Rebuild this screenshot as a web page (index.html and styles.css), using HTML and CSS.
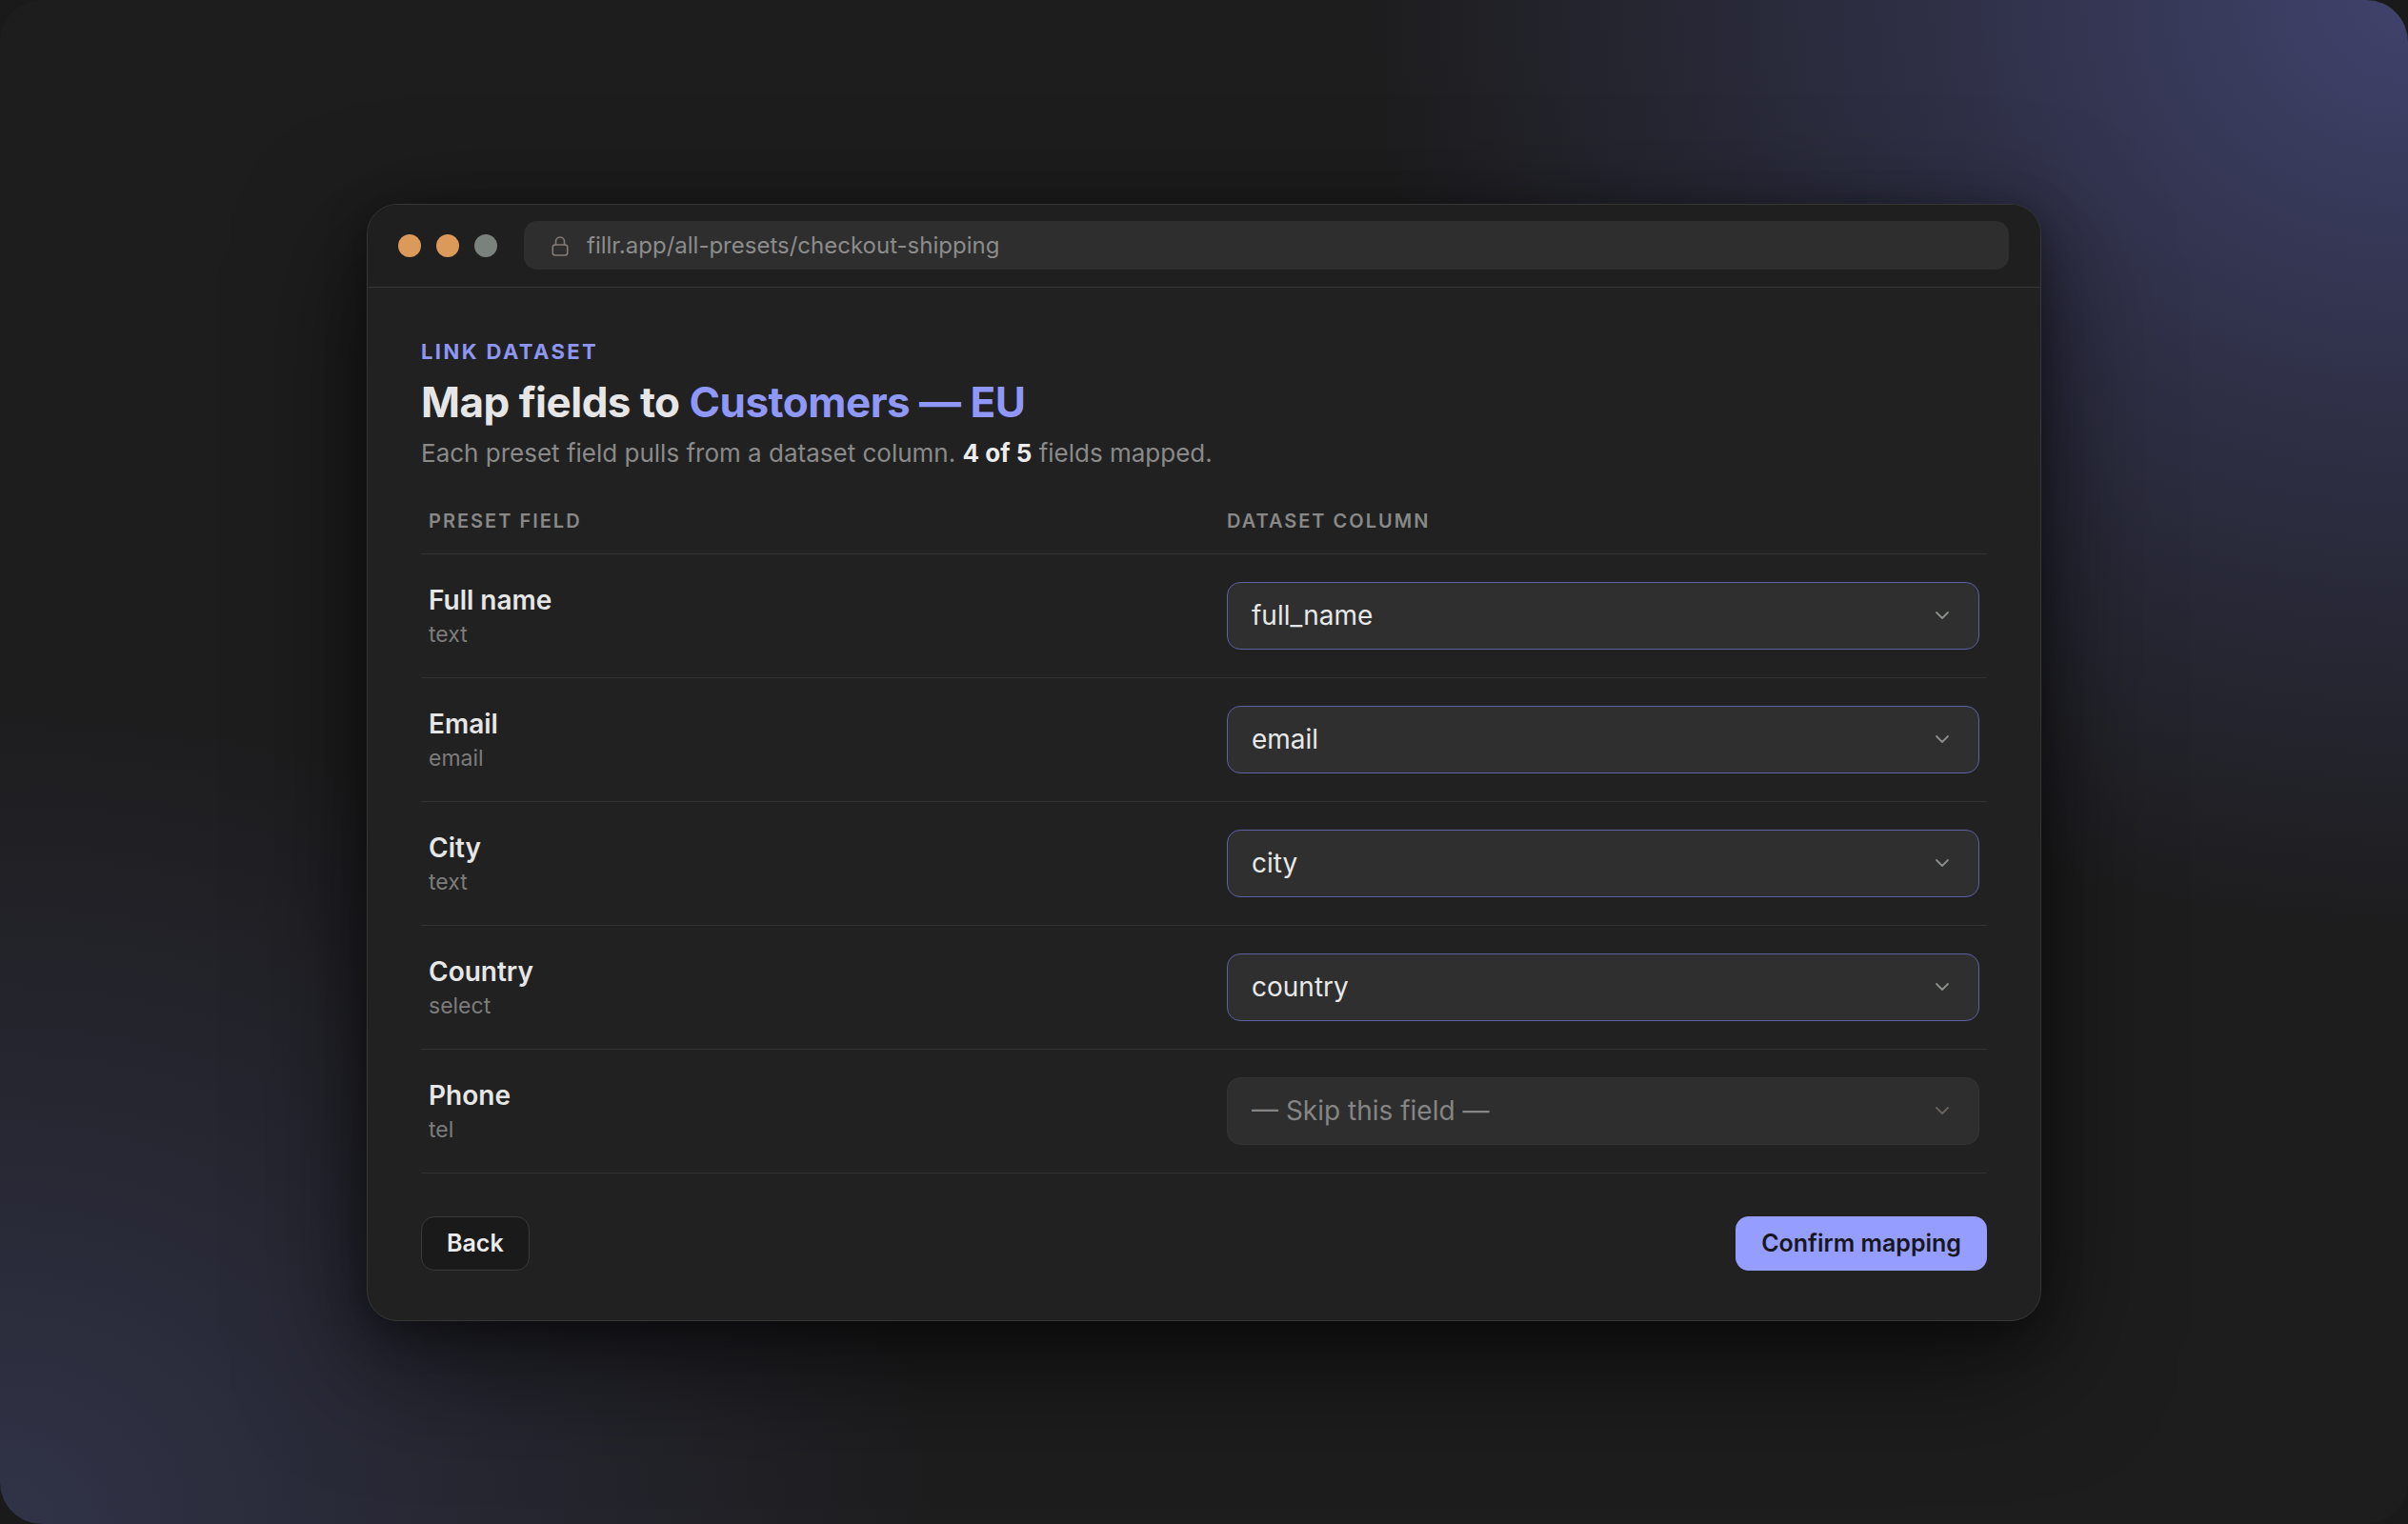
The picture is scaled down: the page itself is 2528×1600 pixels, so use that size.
FILE: index.html
```html
<!DOCTYPE html>
<html lang="en">
<head>
<meta charset="utf-8">
<title>Link dataset — fillr</title>
<link rel="stylesheet" href="styles.css">
</head>
<body>
<div class="stage">
  <div class="window">
    <div class="titlebar">
      <div class="lights">
        <span class="light light-close"></span>
        <span class="light light-min"></span>
        <span class="light light-max"></span>
      </div>
      <div class="address">
        <svg class="lock" viewBox="0 0 20 22" width="20" height="22" aria-hidden="true">
          <path d="M5.5 10V6.5a4.5 4.5 0 0 1 9 0V10" fill="none" stroke="currentColor" stroke-width="1.6" stroke-linecap="round"/>
          <rect x="2.3" y="10" width="15.4" height="11" rx="2.4" fill="none" stroke="currentColor" stroke-width="1.6"/>
        </svg>
        <span class="address-text">fillr.app/all-presets/checkout-shipping</span>
      </div>
    </div>

    <div class="content">
      <div class="eyebrow">Link dataset</div>
      <h1 class="title">Map fields to <span class="accent">Customers — EU</span></h1>
      <p class="lede">Each preset field pulls from a dataset column. <strong>4 of 5</strong> fields mapped.</p>

      <div class="mapping">
        <div class="mapping-head">
          <div>Preset field</div>
          <div>Dataset column</div>
        </div>

        <div class="mapping-row">
          <div class="field">
            <div class="field-name">Full name</div>
            <div class="field-type">text</div>
          </div>
          <div class="picker is-mapped">
            <span class="picker-value">full_name</span>
            <svg class="chevron" viewBox="0 0 14 8" width="14" height="8" aria-hidden="true"><path d="M1 1l6 6 6-6" fill="none" stroke="currentColor" stroke-width="1.8" stroke-linecap="round" stroke-linejoin="round"/></svg>
          </div>
        </div>

        <div class="mapping-row">
          <div class="field">
            <div class="field-name">Email</div>
            <div class="field-type">email</div>
          </div>
          <div class="picker is-mapped">
            <span class="picker-value">email</span>
            <svg class="chevron" viewBox="0 0 14 8" width="14" height="8" aria-hidden="true"><path d="M1 1l6 6 6-6" fill="none" stroke="currentColor" stroke-width="1.8" stroke-linecap="round" stroke-linejoin="round"/></svg>
          </div>
        </div>

        <div class="mapping-row">
          <div class="field">
            <div class="field-name">City</div>
            <div class="field-type">text</div>
          </div>
          <div class="picker is-mapped">
            <span class="picker-value">city</span>
            <svg class="chevron" viewBox="0 0 14 8" width="14" height="8" aria-hidden="true"><path d="M1 1l6 6 6-6" fill="none" stroke="currentColor" stroke-width="1.8" stroke-linecap="round" stroke-linejoin="round"/></svg>
          </div>
        </div>

        <div class="mapping-row">
          <div class="field">
            <div class="field-name">Country</div>
            <div class="field-type">select</div>
          </div>
          <div class="picker is-mapped">
            <span class="picker-value">country</span>
            <svg class="chevron" viewBox="0 0 14 8" width="14" height="8" aria-hidden="true"><path d="M1 1l6 6 6-6" fill="none" stroke="currentColor" stroke-width="1.8" stroke-linecap="round" stroke-linejoin="round"/></svg>
          </div>
        </div>

        <div class="mapping-row">
          <div class="field">
            <div class="field-name">Phone</div>
            <div class="field-type">tel</div>
          </div>
          <div class="picker is-skipped">
            <span class="picker-value">— Skip this field —</span>
            <svg class="chevron" viewBox="0 0 14 8" width="14" height="8" aria-hidden="true"><path d="M1 1l6 6 6-6" fill="none" stroke="currentColor" stroke-width="1.8" stroke-linecap="round" stroke-linejoin="round"/></svg>
          </div>
        </div>
      </div>

      <div class="actions">
        <button class="btn btn-ghost" type="button">Back</button>
        <button class="btn btn-primary" type="button">Confirm mapping</button>
      </div>
    </div>
  </div>
</div>
</body>
</html>
```

FILE: styles.css
```css
* {
  box-sizing: border-box;
}

html,
body {
  margin: 0;
  padding: 0;
  background: #1a1a1a;
}

body {
  font-family: Inter, "Noto Sans", "Liberation Sans", sans-serif;
  color: #e4e4e4;
  -webkit-font-smoothing: antialiased;
}

/* full-viewport backdrop with soft indigo glows in two corners */
.stage {
  width: 100vw;
  height: 100vh;
  border-radius: 44px;
  overflow: hidden;
  display: flex;
  align-items: center;
  justify-content: center;
  background:
    radial-gradient(ellipse 1400px 1250px at 100% 0%, rgba(66, 68, 112, 0.95) 0%, rgba(56, 58, 92, 0.6) 38%, rgba(40, 40, 60, 0) 78%),
    radial-gradient(ellipse 1200px 1050px at 0% 100%, rgba(50, 52, 74, 0.95) 0%, rgba(44, 45, 62, 0.55) 45%, rgba(30, 30, 36, 0) 82%),
    #1d1d1e;
}

/* browser window */
.window {
  width: 1758px;
  background: #212121;
  border: 1px solid #363636;
  border-radius: 32px;
  overflow: hidden;
  box-shadow:
    0 40px 130px rgba(0, 0, 0, 0.6),
    0 10px 40px rgba(0, 0, 0, 0.35);
}

.titlebar {
  height: 87px;
  display: flex;
  align-items: center;
  padding: 0 33px 0 32px;
  background: #1f1f1f;
  border-bottom: 1px solid #353535;
}

.lights {
  display: flex;
  gap: 16px;
  margin-right: 28px;
}

.light {
  width: 24px;
  height: 24px;
  border-radius: 50%;
  background: #dc9a5a;
}

.light-max {
  background: #7b817d;
}

.address {
  flex: 1;
  height: 51px;
  display: flex;
  align-items: center;
  gap: 18px;
  padding: 0 28px;
  background: #2e2e2e;
  border-radius: 14px;
}

.lock {
  color: #857b76;
  flex: none;
}

.address-text {
  font-size: 24px;
  color: #8c8c8c;
}

/* page content */
.content {
  padding: 53px 56px 52px;
}

.eyebrow {
  font-size: 22px;
  line-height: 28px;
  font-weight: 700;
  letter-spacing: 0.11em;
  text-transform: uppercase;
  color: #8e96f3;
  margin-bottom: 12px;
}

.title {
  margin: 0;
  font-size: 44px;
  line-height: 54px;
  font-weight: 700;
  letter-spacing: -0.5px;
  color: #e6e6e6;
}

.accent {
  color: #8f97f7;
}

.lede {
  margin: 9px 0 0;
  font-size: 26px;
  line-height: 36px;
  color: #8a8a8a;
}

.lede strong {
  color: #ececec;
  font-weight: 700;
}

/* field → column table */
.mapping {
  margin-top: 41px;
}

.mapping-head,
.mapping-row {
  display: grid;
  grid-template-columns: 1fr 1fr;
  column-gap: 48px;
  padding: 0 8px;
  border-bottom: 1px solid #333333;
}

.mapping-head {
  padding-bottom: 22px;
  font-size: 20px;
  line-height: 24px;
  font-weight: 600;
  letter-spacing: 0.1em;
  text-transform: uppercase;
  color: #888888;
}

.mapping-row {
  padding-top: 29px;
  padding-bottom: 29px;
  align-items: center;
  border-bottom-color: #323232;
}

.field {
  margin-top: 2px;
}

.field-name {
  font-size: 28px;
  line-height: 34px;
  font-weight: 600;
  color: #e6e6e6;
}

.field-type {
  margin-top: 4px;
  font-size: 23px;
  line-height: 30px;
  color: #7c7c7c;
}

.picker {
  height: 71px;
  display: flex;
  align-items: center;
  justify-content: space-between;
  padding: 0 31px 0 25px;
  border: 1px solid #5c62a2;
  border-radius: 14px;
  background: #2f2f2f;
}

.picker-value {
  font-size: 28px;
  color: #e8e8e8;
}

.chevron {
  color: #8a8f8a;
  flex: none;
}

.picker.is-skipped {
  border-color: #333333;
  background: #2e2e2e;
}

.picker.is-skipped .picker-value {
  color: #858585;
}

.picker.is-skipped .chevron {
  color: #6a6360;
}

/* footer buttons */
.actions {
  margin-top: 45px;
  display: flex;
  justify-content: space-between;
  align-items: center;
}

.btn {
  height: 57px;
  font-family: inherit;
  font-size: 25px;
  font-weight: 600;
  border-radius: 14px;
  cursor: pointer;
}

.btn-ghost {
  padding: 0 26px;
  background: #1a1a1a;
  color: #ececec;
  border: 1px solid #3a3a3a;
}

.btn-primary {
  padding: 0 27px;
  background: #959dff;
  color: #17171c;
  border: none;
}
```
